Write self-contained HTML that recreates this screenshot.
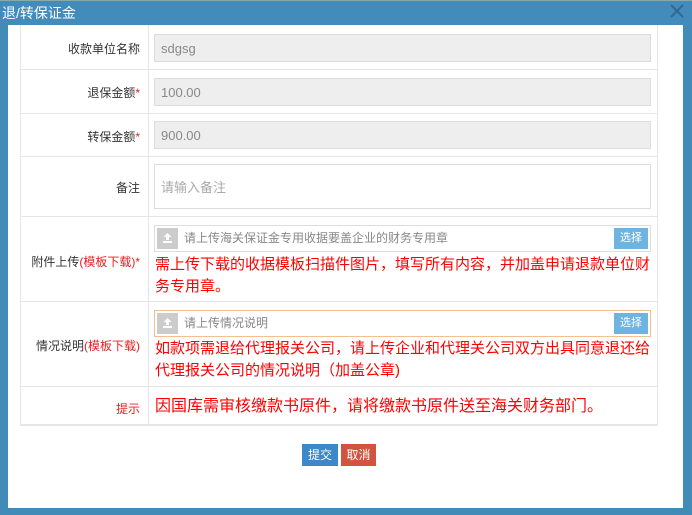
<!DOCTYPE html>
<html><head><meta charset="utf-8"><style>
*{margin:0;padding:0;box-sizing:border-box}
body{width:692px;height:515px;background:#428bb9;position:relative;overflow:hidden;font-family:"Liberation Sans","Noto Sans CJK SC",sans-serif}
.a{position:absolute}
.title{left:0;top:0;width:692px;height:25px;background:#428bba;border-top:1px solid #8aa;color:#fff;font-size:14px;line-height:24px;padding-left:2px}
.x{right:8px;top:4px}
.body{left:8px;top:25px;width:675px;height:483px;background:#fff}
.hl{height:1px;background:#e6e6e6;left:20px;width:638px}
.vl{width:1px;background:#e6e6e6}
.lab{width:120px;text-align:right;font-size:12px;color:#333;left:20px}
.r{color:#e52020}
.inp{left:154px;width:497px;background:#eee;border:1px solid #ddd;font-size:13px;color:#888;padding-left:6px;display:flex;align-items:center}
.up{left:154px;width:497px;height:27px;border:1px solid #ddd;background:#fff}
.ic{position:absolute;left:2px;top:2px;width:21px;height:21px;background:#ccc}
.ph{position:absolute;left:29px;top:0;line-height:25px;font-size:12px;color:#888}
.sel{position:absolute;right:2px;top:2px;width:34px;height:21px;background:#6fb3e0;color:#fff;font-size:11px;text-align:center;line-height:21px}
.red{left:155px;color:#f00;font-size:15px;line-height:22px;width:495px}
</style></head><body>
<div class="a title">退/转保证金</div>
<div class="a x"><svg width="14" height="14"><path d="M1 1L13 13M13 1L1 13" stroke="#2f6a92" stroke-width="2"/></svg></div>
<div class="a body"></div>
<div class="a vl" style="left:20px;top:25px;height:400px"></div>
<div class="a vl" style="left:148px;top:25px;height:400px"></div>
<div class="a vl" style="left:657px;top:25px;height:400px"></div>
<div class="a hl" style="top:69px"></div>
<div class="a hl" style="top:113px"></div>
<div class="a hl" style="top:156px"></div>
<div class="a hl" style="top:216px"></div>
<div class="a hl" style="top:301px"></div>
<div class="a hl" style="top:386px"></div>
<div class="a hl" style="top:424px;height:2px"></div>

<div class="a lab" style="top:40px">收款单位名称</div>
<div class="a inp" style="top:34px;height:28px;line-height:27px">sdgsg</div>
<div class="a lab" style="top:84px">退保金额<span class="r">*</span></div>
<div class="a inp" style="top:78px;height:28px;line-height:27px">100.00</div>
<div class="a lab" style="top:128px">转保金额<span class="r">*</span></div>
<div class="a inp" style="top:121px;height:28px;line-height:27px">900.00</div>
<div class="a lab" style="top:179px">备注</div>
<div class="a inp" style="top:164px;height:45px;background:#fff;color:#aaa">请输入备注</div>

<div class="a lab" style="top:253px;width:120px">附件上传<span class="r">(模板下载)*</span></div>
<div class="a up" style="top:225px"><div class="ic"><svg width="21" height="21"><path d="M10.5 5l-4 4h2.5v3h3V9h2.5z M6 13v2h9v-2" fill="#fff"/></svg></div><div class="ph">请上传海关保证金专用收据要盖企业的财务专用章</div><div class="sel">选择</div></div>
<div class="a red" style="top:254px">需上传下载的收据模板扫描件图片，填写所有内容，并加盖申请退款单位财务专用章。</div>

<div class="a lab" style="top:337px">情况说明<span class="r">(模板下载)</span></div>
<div class="a up" style="top:310px;border-color:#f0c090"><div class="ic"><svg width="21" height="21"><path d="M10.5 5l-4 4h2.5v3h3V9h2.5z M6 13v2h9v-2" fill="#fff"/></svg></div><div class="ph">请上传情况说明</div><div class="sel">选择</div></div>
<div class="a red" style="top:338px">如款项需退给代理报关公司，请上传企业和代理关公司双方出具同意退还给代理报关公司的情况说明（加盖公章)</div>

<div class="a lab" style="top:400px;color:#e52020">提示</div>
<div class="a red" style="top:396px;font-size:16px">因国库需审核缴款书原件，请将缴款书原件送至海关财务部门。</div>

<div class="a" style="left:302px;top:444px;width:36px;height:22px;background:#3d88c8;color:#fff;font-size:12px;text-align:center;line-height:22px">提交</div>
<div class="a" style="left:341px;top:444px;width:35px;height:22px;background:#d05440;color:#fff;font-size:12px;text-align:center;line-height:22px">取消</div>
</body></html>
